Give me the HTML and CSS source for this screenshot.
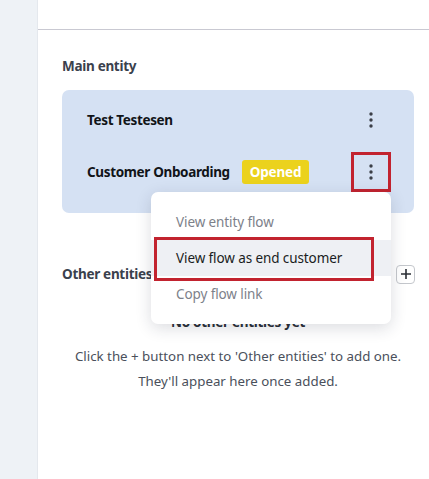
FILE: index.html
```html
<!DOCTYPE html>
<html lang="en">
  <head>
    <meta charset="UTF-8" />
    <meta name="viewport" content="width=device-width, initial-scale=1.0" />
    <title>Entities</title>
    <link rel="stylesheet" href="styles.css">
  </head>
  <body>
    <div class="layout">
      <aside class="sidebar"></aside>

      <main class="panel">
        <div class="panel-header"></div>

        <div class="panel-body">
          <h3 class="section-title">Main entity</h3>

          <div class="entity-card">
            <div class="entity-row">
              <span class="entity-name">Test Testesen</span>
              <button class="kebab">
                <svg width="4" height="16" viewBox="0 0 4 16">
                  <circle cx="2" cy="2" r="1.7" fill="#3b3f47" />
                  <circle cx="2" cy="8" r="1.7" fill="#3b3f47" />
                  <circle cx="2" cy="14" r="1.7" fill="#3b3f47" />
                </svg>
              </button>
            </div>

            <div class="entity-row">
              <span class="entity-name">Customer Onboarding</span>
              <span class="badge">Opened</span>
              <div class="menu-anchor">
                <button class="kebab marked">
                  <svg width="4" height="16" viewBox="0 0 4 16">
                    <circle cx="2" cy="2" r="1.7" fill="#3b3f47" />
                    <circle cx="2" cy="8" r="1.7" fill="#3b3f47" />
                    <circle cx="2" cy="14" r="1.7" fill="#3b3f47" />
                  </svg>
                </button>

                <ul class="menu">
                  <li class="menu-item">View entity flow</li>
                  <li class="menu-item active">View flow as end customer</li>
                  <li class="menu-item">Copy flow link</li>
                </ul>
              </div>
            </div>
          </div>

          <div class="others-row">
            <h3 class="section-title">Other entities</h3>
            <button class="add-btn">
              <svg width="12" height="12" viewBox="0 0 12 12">
                <path d="M6 1v10M1 6h10" stroke="#2b2f36" stroke-width="1.6" />
              </svg>
            </button>
          </div>

          <div class="empty-state">
            <h4>No other entities yet</h4>
            <p>Click the + button next to 'Other entities' to add one.<br />They'll appear here once added.</p>
          </div>
        </div>
      </main>
    </div>
  </body>
</html>
```

FILE: styles.css
```css
* {
  margin: 0;
  padding: 0;
  box-sizing: border-box;
}

body {
  font-family: "Noto Sans", sans-serif;
  background-color: #ffffff;
  color: #1f2329;
}

.layout {
  display: flex;
  min-height: 479px;
}

.sidebar {
  width: 38px;
  flex-shrink: 0;
  background-color: #eef2f6;
  border-right: 1px solid #e4e8ed;
}

.panel {
  flex: 1;
}

.panel-header {
  height: 30px;
  border-bottom: 1px solid #c9c9d2;
}

.panel-body {
  padding: 26px 15px 0 24px;
}

.section-title {
  font-size: 13.5px;
  font-weight: 700;
  color: #3a414d;
  line-height: 20px;
  letter-spacing: -0.3px;
}

.entity-card {
  margin-top: 14px;
  background-color: #d5e1f3;
  border-radius: 7px;
  padding: 10px 23px 21px 25px;
  display: flex;
  flex-direction: column;
  gap: 12px;
}

.entity-row {
  height: 40px;
  display: flex;
  align-items: center;
}

.entity-name {
  font-size: 13.5px;
  font-weight: 700;
  color: #111418;
  letter-spacing: -0.35px;
}

.badge {
  margin-left: 12px;
  background-color: #ebd21d;
  color: #ffffff;
  font-size: 13.5px;
  font-weight: 700;
  letter-spacing: -0.2px;
  padding: 0 8px;
  line-height: 24px;
  border-radius: 3px;
}

.kebab {
  margin-left: auto;
  width: 40px;
  height: 40px;
  border: none;
  background: transparent;
  display: flex;
  justify-content: center;
  align-items: center;
}

.menu-anchor {
  margin-left: auto;
  position: relative;
}

.kebab.marked {
  border: 3px solid #c2232f;
}

.menu {
  position: absolute;
  top: 40px;
  right: 0;
  width: 240px;
  list-style: none;
  background-color: #ffffff;
  border-radius: 7px;
  padding: 12px 0;
  box-shadow: 0 4px 16px rgba(30, 40, 60, 0.16);
  z-index: 2;
}

.menu-item {
  position: relative;
  height: 36px;
  line-height: 36px;
  padding-left: 25px;
  font-size: 13.5px;
  letter-spacing: -0.1px;
  color: #7d818a;
}

.menu-item.active {
  background-color: #eef0f4;
  color: #1a1d22;
}

.menu-item.active::after {
  content: "";
  position: absolute;
  left: 3px;
  top: -3px;
  width: 220px;
  height: 44px;
  box-sizing: border-box;
  border: 3px solid #c2232f;
}

.others-row {
  margin-top: 51px;
  display: flex;
  align-items: center;
  justify-content: space-between;
}

.add-btn {
  width: 19px;
  height: 19px;
  margin-right: -1px;
  border: 1px solid #c4c7cc;
  border-radius: 4px;
  background: #ffffff;
  display: flex;
  justify-content: center;
  align-items: center;
}

.empty-state {
  margin-top: 28px;
  text-align: center;
}

.empty-state h4 {
  font-size: 13.5px;
  font-weight: 700;
  color: #2a2f37;
  line-height: 20px;
  letter-spacing: -0.3px;
}

.empty-state p {
  margin-top: 12px;
  font-size: 13.3px;
  line-height: 25px;
  color: #4a505b;
}
```
